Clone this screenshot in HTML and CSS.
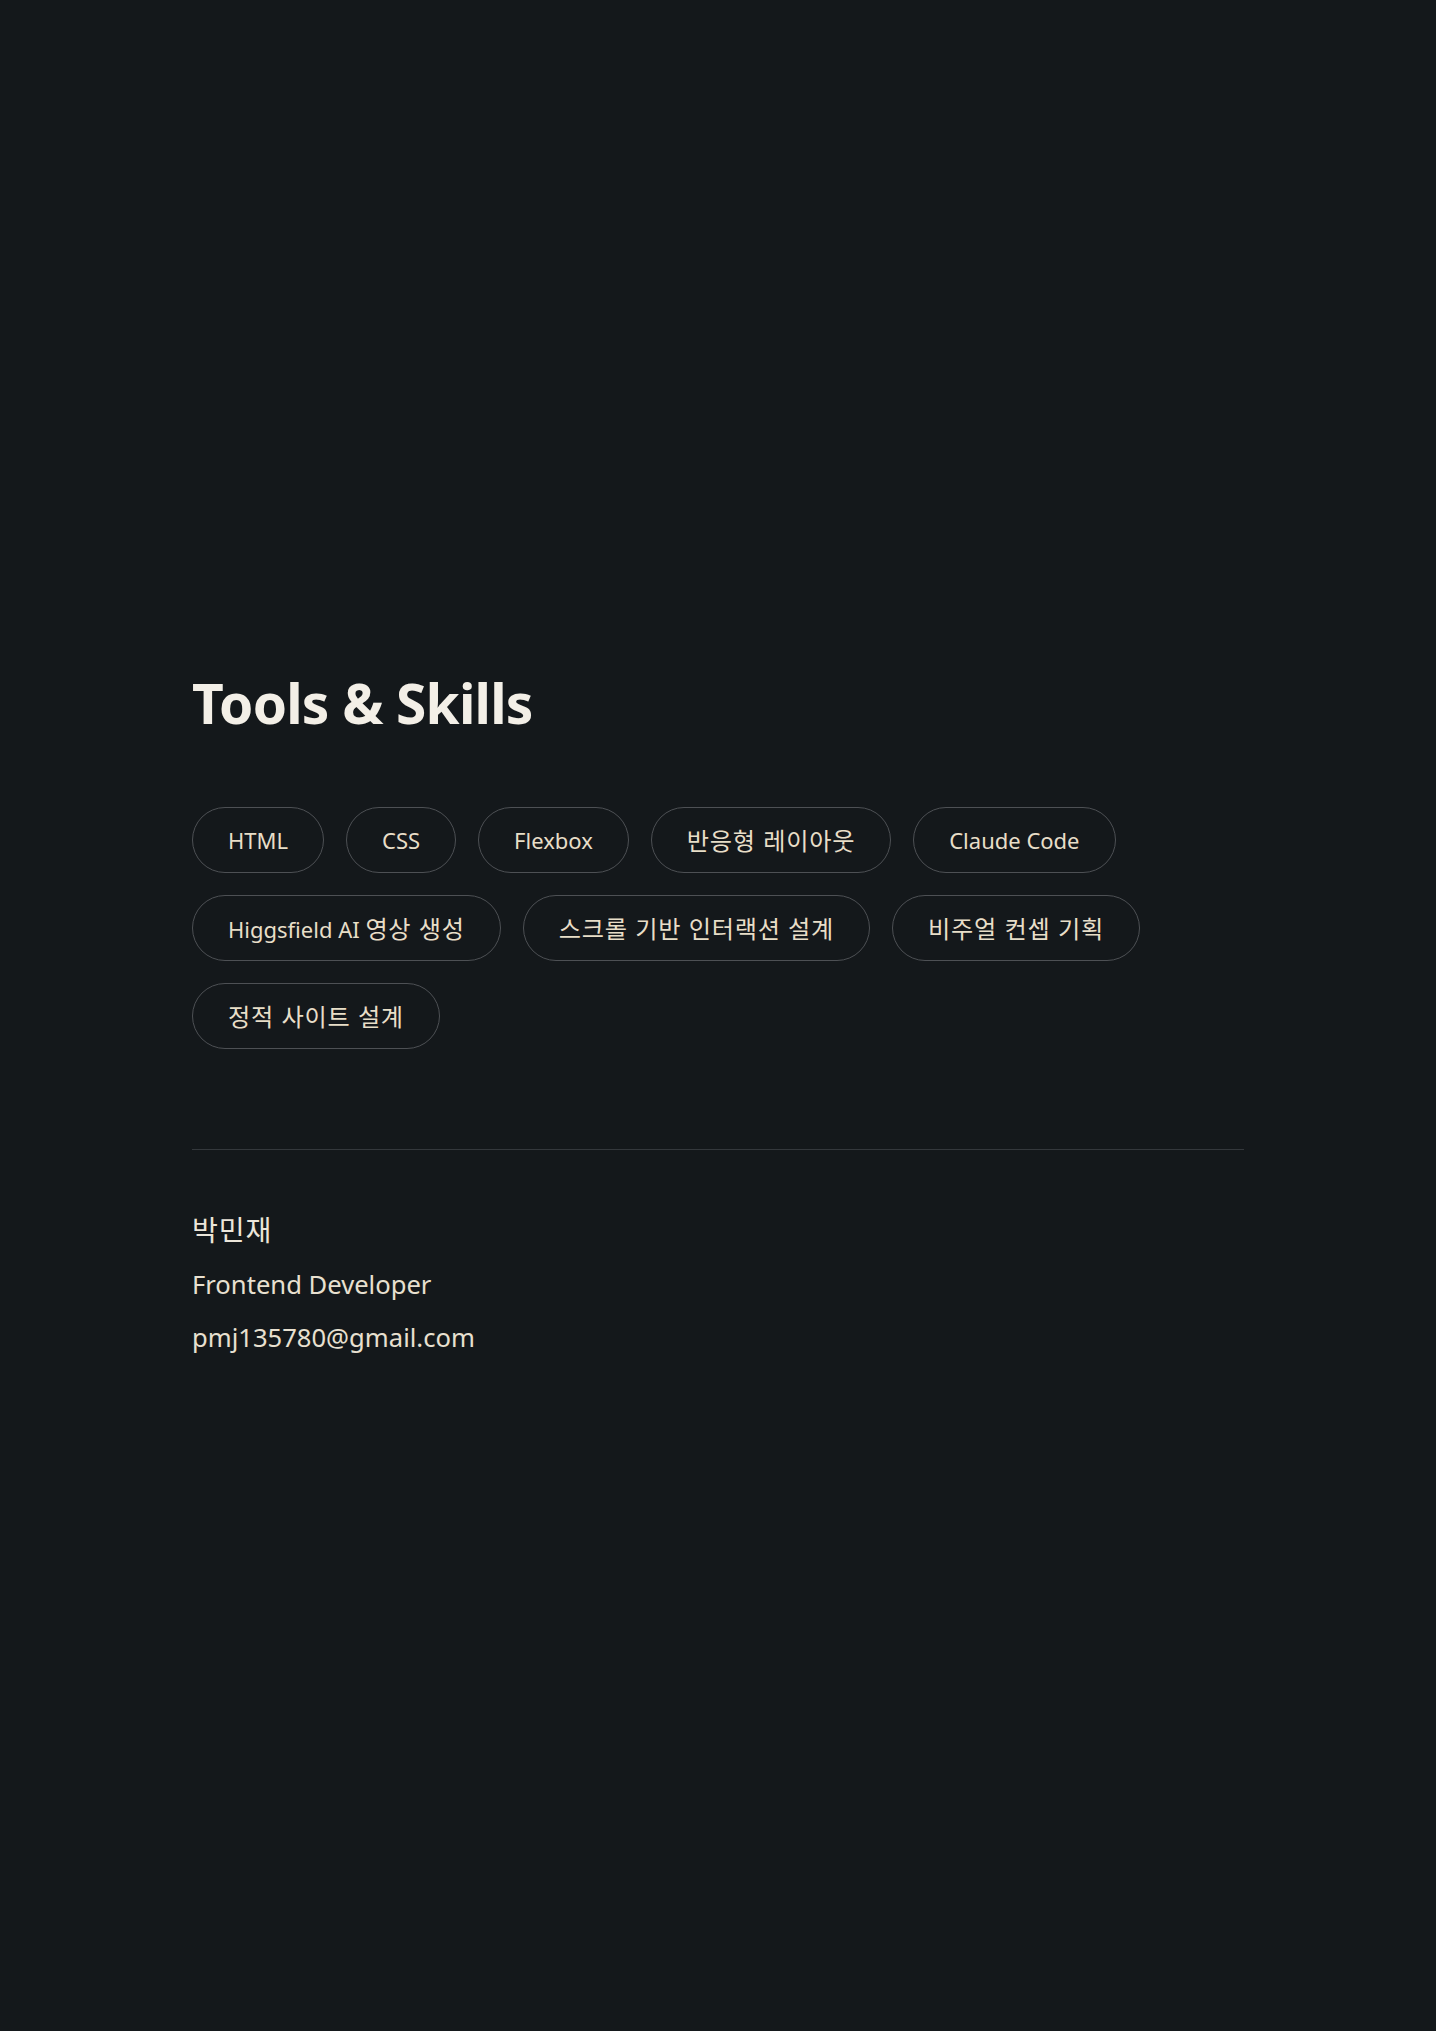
FILE: index.html
```html
<!DOCTYPE html>
<html lang="ko">
<head>
<meta charset="utf-8">
<title>Tools &amp; Skills</title>
<link rel="stylesheet" href="styles.css">
</head>
<body>
<main class="page">
  <section class="skills">
    <h2 class="skills-title">Tools &amp; Skills</h2>
    <ul class="tag-list">
      <li class="tag">HTML</li>
      <li class="tag">CSS</li>
      <li class="tag">Flexbox</li>
      <li class="tag"><span class="ko">반응형 레이아웃</span></li>
      <li class="tag">Claude Code</li>
      <li class="tag">Higgsfield AI <span class="ko">영상 생성</span></li>
      <li class="tag"><span class="ko">스크롤 기반 인터랙션 설계</span></li>
      <li class="tag"><span class="ko">비주얼 컨셉 기획</span></li>
      <li class="tag"><span class="ko">정적 사이트 설계</span></li>
    </ul>
  </section>
  <footer class="footer">
    <p class="footer-name"><span class="ko">박민재</span></p>
    <p class="footer-line">Frontend Developer</p>
    <p class="footer-line">pmj135780@gmail.com</p>
  </footer>
</main>
</body>
</html>
```

FILE: styles.css
```css
* {
  box-sizing: border-box;
}

html, body {
  margin: 0;
  padding: 0;
}

body {
  background: #14181b;
  color: #e8e0d0;
  font-family: "Noto Sans", "Noto Sans CJK KR", sans-serif;
  min-height: 2031px;
}

.page {
  max-width: 1100px;
  margin: 0 auto;
  padding: 670px 24px 0;
}

.ko {
  font-family: "Noto Sans CJK KR", sans-serif;
  font-size: 1.1em;
  letter-spacing: 0.03em;
}

.skills-title {
  margin: 0;
  font-size: 55px;
  line-height: 66px;
  letter-spacing: -0.8px;
  font-weight: 700;
  color: #f3efe7;
}

.tag-list {
  list-style: none;
  margin: 71px 0 0;
  padding: 0;
  display: flex;
  flex-wrap: wrap;
  gap: 22px 22px;
}

.tag {
  border: 1px solid #4d5054;
  border-radius: 999px;
  padding: 16px 35px;
  font-size: 22px;
  line-height: 32px;
  height: 66px;
  color: #e8dec8;
  white-space: nowrap;
}

.footer {
  margin-top: 100px;
  border-top: 1px solid #34383c;
  padding-top: 62px;
  display: flex;
  flex-direction: column;
  gap: 19px;
}

.footer p {
  margin: 0;
}

.footer-name {
  font-size: 25.6px;
  line-height: 34px;
  color: #ece6da;
}

.footer-line {
  font-size: 25.6px;
  line-height: 34px;
  color: #e8e0d0;
}
```
